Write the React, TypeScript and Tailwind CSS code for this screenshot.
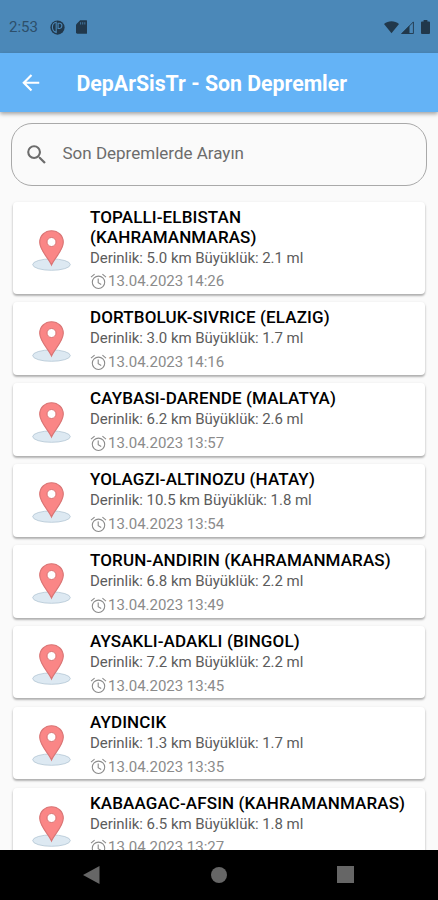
import { MdArrowBack, MdSearch } from 'react-icons/md'

const quakes = [
    { place: "TOPALLI-ELBISTAN\n(KAHRAMANMARAS)", depth: "5.0", size: "2.1", time: "13.04.2023 14:26", height: "h-[92.5px]" },
    { place: "DORTBOLUK-SIVRICE (ELAZIG)", depth: "3.0", size: "1.7", time: "13.04.2023 14:16", height: "h-[72.5px]" },
    { place: "CAYBASI-DARENDE (MALATYA)", depth: "6.2", size: "2.6", time: "13.04.2023 13:57", height: "h-[72.5px]" },
    { place: "YOLAGZI-ALTINOZU (HATAY)", depth: "10.5", size: "1.8", time: "13.04.2023 13:54", height: "h-[72.5px]" },
    { place: "TORUN-ANDIRIN (KAHRAMANMARAS)", depth: "6.8", size: "2.2", time: "13.04.2023 13:49", height: "h-[72.5px]" },
    { place: "AYSAKLI-ADAKLI (BINGOL)", depth: "7.2", size: "2.2", time: "13.04.2023 13:45", height: "h-[72.5px]" },
    { place: "AYDINCIK", depth: "1.3", size: "1.7", time: "13.04.2023 13:35", height: "h-[72.5px]" },
    { place: "KABAAGAC-AFSIN (KAHRAMANMARAS)", depth: "6.5", size: "1.8", time: "13.04.2023 13:27", height: "h-[72.5px]" },
]

function Pin() {
    return (
        <svg viewBox="0 0 39 41" className="w-[39px] h-[41px] mt-[5px] shrink-0">
            <ellipse cx="19.5" cy="34.6" rx="18.8" ry="5.7" fill="#dde9f2" stroke="#b4c6d4" strokeWidth="0.8" />
            <path
                d="M19.5 35 C17 28.5 7.7 20.5 7.7 12.3 C7.7 5.6 13 .7 19.5 .7 S31.3 5.6 31.3 12.3 C31.3 20.5 22 28.5 19.5 35Z"
                fill="#fa8686"
                stroke="#d97474"
                strokeWidth="1.1"
            />
            <circle cx="19.5" cy="12" r="4.5" fill="#fff" stroke="#d97474" strokeWidth="1" />
        </svg>
    )
}

function AlarmClock() {
    return (
        <svg viewBox="0 0 17 17" className="w-[17px] h-[17px] mr-[1px]" fill="none" stroke="currentColor" strokeWidth="1.1">
            <circle cx="8.5" cy="9.3" r="6.2" />
            <path d="M8.2 5.6 V9.7 L11.2 11.4 M1 4.2 L4.6 1.2 M16 4.2 L12.4 1.2" />
        </svg>
    )
}

function StatusBar() {
    return (
        <div className="h-[52.5px] shrink-0 bg-[#4b88b8] flex items-center pl-[9px] pr-[8px] pt-[2px] text-[#21384b]">
            <span className="text-[15px] w-[40px] text-[#2d4f6b]">2:53</span>
            <svg viewBox="0 0 16 16" className="w-[15px] h-[15px] ml-[1px]">
                <circle cx="8" cy="8" r="7.6" fill="currentColor" />
                <path d="M6.6 2.4 C3.6 3 2.4 5.6 2.6 8.3 C2.8 10.8 4.3 12.6 6.6 13.4Z M8.6 3.4 H10.6 C13.6 4 13.2 8.6 10.4 9 H8.6Z" fill="none" stroke="#4b88b8" strokeWidth="1.2" />
            </svg>
            <svg viewBox="0 0 12 14" className="w-[11.5px] h-[14px] ml-[10.5px]">
                <path d="M4.3 0 H10.6 Q12 0 12 1.4 V12.6 Q12 14 10.6 14 H1.4 Q0 14 0 12.6 V4.3Z" fill="currentColor" />
                <path d="M4.8 2 V4.4 M7 2 V4.4 M9.2 2 V4.4" stroke="#4b88b8" strokeWidth="0.8" />
            </svg>
            <div className="ml-auto flex items-center">
                <svg viewBox="0 0 16 13" className="w-[15px] h-[12.5px]">
                    <path d="M8 13 L0 3 C4.6 -1 11.4 -1 16 3Z" fill="currentColor" />
                </svg>
                <svg viewBox="0 0 13 13" className="w-[13px] h-[13px] ml-[2.5px]">
                    <path d="M12.4 .9 V12.5 H.9Z" fill="none" stroke="currentColor" strokeWidth="0.9" />
                    <path d="M8.5 4.5 V13 H0Z" fill="currentColor" />
                </svg>
                <svg viewBox="0 0 9 14" className="w-[9px] h-[14px] ml-[7px]">
                    <path d="M2.6 0 H6.4 V1.5 H8 Q9 1.5 9 2.5 V13 Q9 14 8 14 H1 Q0 14 0 13 V2.5 Q0 1.5 1 1.5 H2.6Z" fill="currentColor" />
                </svg>
            </div>
        </div>
    )
}

export default function App() {
    return (
        <div className="w-[438px] h-[900px] overflow-hidden flex flex-col bg-[#fafafa] font-[Roboto,sans-serif]">
            <StatusBar />

            <header className="h-[59.5px] shrink-0 bg-[#64b3f6] flex items-center pl-[18px] text-white shadow-[0_2px_4px_rgba(0,0,0,0.35)]">
                <MdArrowBack className="w-[25.5px] h-[25.5px]" />
                <h1 className="ml-[33px] pt-[3px] text-[21.3px] font-bold whitespace-nowrap">DepArSisTr - Son Depremler</h1>
            </header>

            <div className="mt-[11px] mx-[11px] h-[63px] shrink-0 rounded-[21px] border border-[#a9a9a9] flex items-center pl-[12px] text-[#6c6c6c]">
                <MdSearch className="w-[25.5px] h-[25.5px]" />
                <span className="ml-[13px] pb-px text-[17px]">Son Depremlerde Arayın</span>
            </div>

            <main className="flex-1 min-h-0 overflow-hidden pt-[15.5px] px-[13px] flex flex-col gap-[8.4px]">
                {quakes.map((q) => (
                    <div
                        key={q.time}
                        className={`${q.height} shrink-0 flex items-center pl-[19px] bg-white rounded-[4px] shadow-[0_2px_2px_rgba(0,0,0,0.22),0_1px_3px_rgba(0,0,0,0.14)]`}
                    >
                        <Pin />
                        <div className="ml-[19px] self-stretch flex flex-col justify-end pb-[3px] whitespace-pre-line">
                            <h2 className="text-[17px] leading-[20px] tracking-[0.12px] font-medium text-black">{q.place}</h2>
                            <p className="text-[15px] leading-[22px] tracking-[-0.05px] text-[#5c5c5c]">
                                Derinlik: {q.depth} km Büyüklük: {q.size} ml
                            </p>
                            <p className="flex items-center h-[19px] mt-[3.5px] text-[15px] tracking-[-0.02px] text-[#8b8b8b]">
                                <AlarmClock />
                                {q.time}
                            </p>
                        </div>
                    </div>
                ))}
            </main>

            {/* Android navigation buttons */}
            <nav className="h-[50.5px] shrink-0 bg-black flex items-center justify-between pl-[83px] pr-[84px]">
                <svg viewBox="0 0 17 18" className="w-[17px] h-[18px]">
                    <path d="M0 9 L16.5 0 V18Z" fill="#666" />
                </svg>
                <div className="w-4 h-4 rounded-full bg-[#666]" />
                <div className="w-[17px] h-[17px] bg-[#666]" />
            </nav>
        </div>
    )
}
